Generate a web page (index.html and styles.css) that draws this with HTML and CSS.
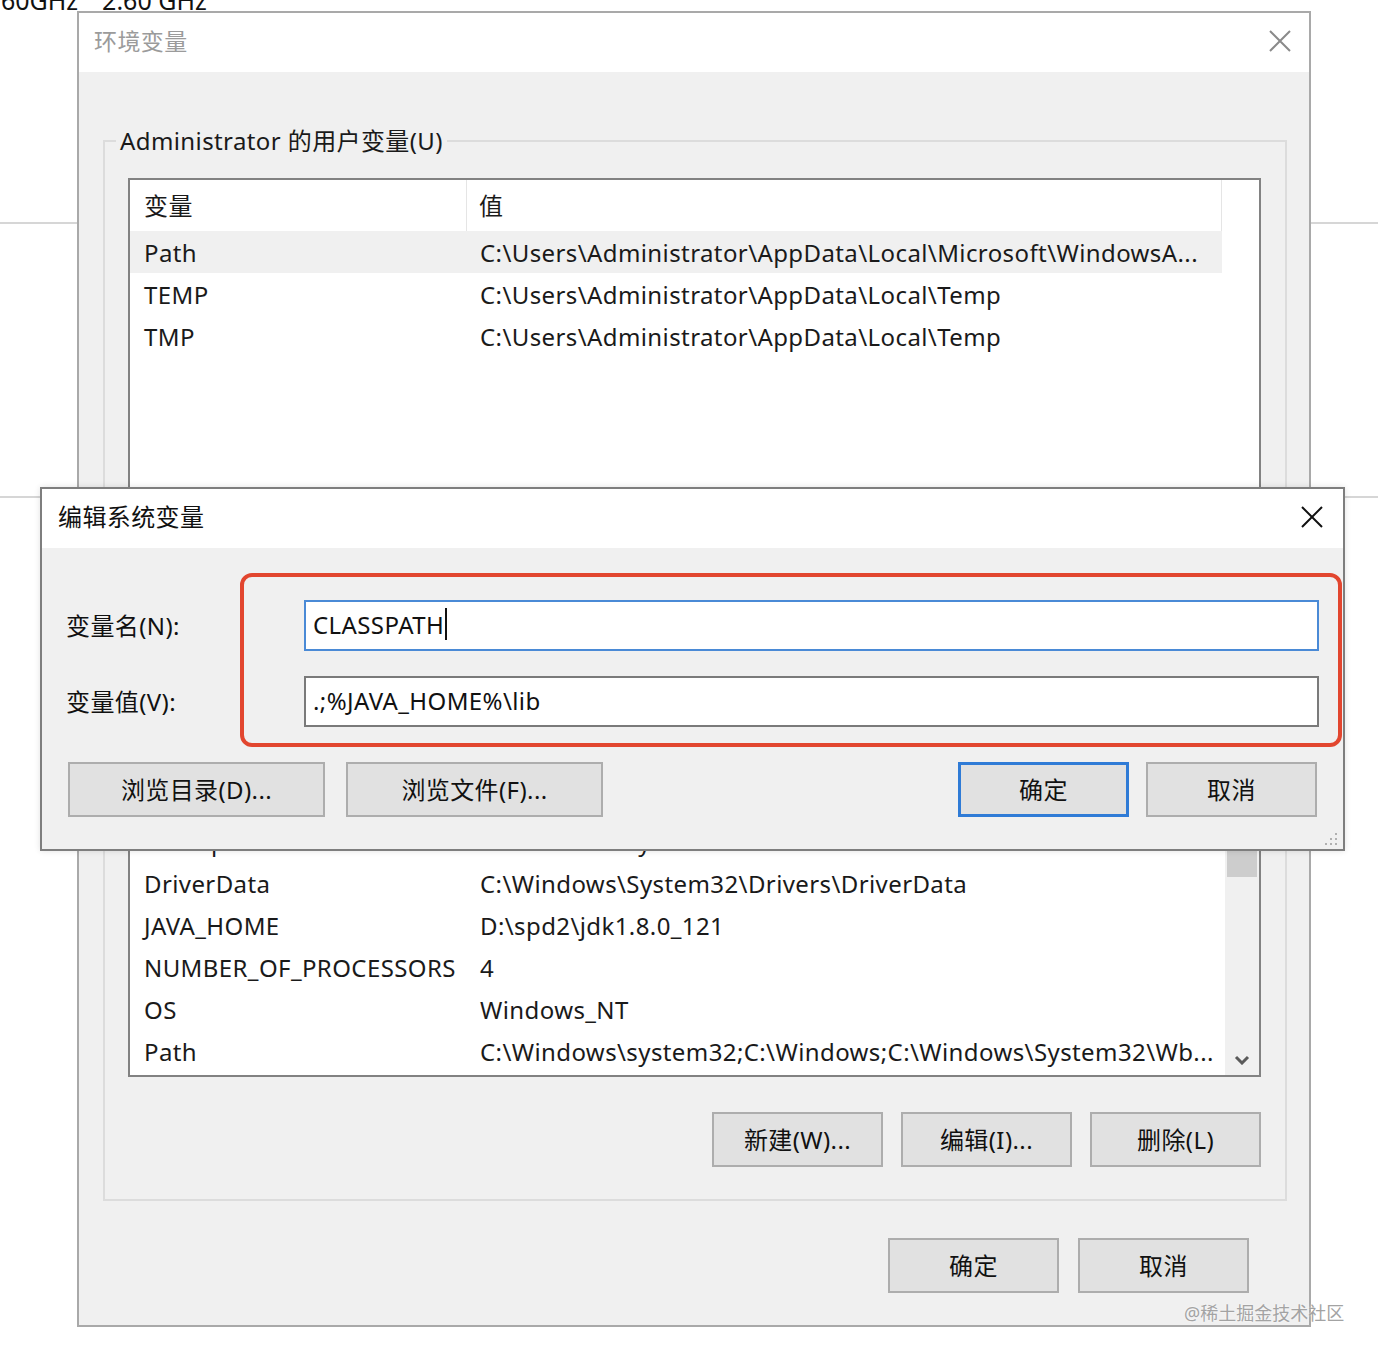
FILE: index.html
```html
<!DOCTYPE html>
<html lang="zh-CN">
<head>
<meta charset="utf-8">
<title>环境变量</title>
<link rel="stylesheet" href="styles.css">
</head>
<body>
<div class="desktop">
  <div class="desk-text"><span class="dt1">2.60GHz</span><span class="dt2">2.60 GHz</span></div>
  <div class="desk-line line1"></div>
  <div class="desk-line line2"></div>
</div>

<div class="win env">
  <div class="titlebar">
    <span class="title inactive">环境变量</span>
    <svg class="close" width="22" height="22" viewBox="0 0 22 22"><path d="M1 1 L21 21 M21 1 L1 21" stroke="#8a8a8a" stroke-width="2" fill="none"/></svg>
  </div>
  <div class="env-body">
    <fieldset class="group group-user">
      <legend>Administrator 的用户变量(U)</legend>
      <div class="list list-user">
        <div class="list-main">
          <div class="lrow lhead"><span class="c1">变量</span><span class="c2">值</span></div>
          <div class="lrow sel"><span class="c1">Path</span><span class="c2">C:\Users\Administrator\AppData\Local\Microsoft\WindowsA...</span></div>
          <div class="lrow"><span class="c1">TEMP</span><span class="c2">C:\Users\Administrator\AppData\Local\Temp</span></div>
          <div class="lrow"><span class="c1">TMP</span><span class="c2">C:\Users\Administrator\AppData\Local\Temp</span></div>
        </div>
      </div>
      <div class="btnrow group-btns">
        <div class="btn">新建(N)...</div>
        <div class="btn">编辑(E)...</div>
        <div class="btn">删除(D)</div>
      </div>
    </fieldset>
    <fieldset class="group group-sys">
      <legend>系统变量(S)</legend>
      <div class="list list-sys">
        <div class="list-main">
          <div class="lrow lhead"><span class="c1">变量</span><span class="c2">值</span></div>
          <div class="lrow"><span class="c1">ComSpec</span><span class="c2">C:\Windows\system32\cmd.exe</span></div>
          <div class="lrow"><span class="c1">DriverData</span><span class="c2">C:\Windows\System32\Drivers\DriverData</span></div>
          <div class="lrow"><span class="c1">JAVA_HOME</span><span class="c2">D:\spd2\jdk1.8.0_121</span></div>
          <div class="lrow"><span class="c1">NUMBER_OF_PROCESSORS</span><span class="c2">4</span></div>
          <div class="lrow"><span class="c1">OS</span><span class="c2">Windows_NT</span></div>
          <div class="lrow"><span class="c1">Path</span><span class="c2">C:\Windows\system32;C:\Windows;C:\Windows\System32\Wb...</span></div>
        </div>
        <div class="vscroll">
          <div class="thumb"></div>
          <svg class="chev" width="16" height="10" viewBox="0 0 16 10"><path d="M2 2 L8 8 L14 2" stroke="#5a5a5a" stroke-width="3" fill="none"/></svg>
        </div>
      </div>
      <div class="btnrow group-btns">
        <div class="btn">新建(W)...</div>
        <div class="btn">编辑(I)...</div>
        <div class="btn">删除(L)</div>
      </div>
    </fieldset>
    <div class="btnrow main-btns">
      <div class="btn">确定</div>
      <div class="btn">取消</div>
    </div>
  </div>
</div>

<div class="win edit">
  <div class="titlebar">
    <span class="title">编辑系统变量</span>
    <svg class="close" width="22" height="22" viewBox="0 0 22 22"><path d="M1 1 L21 21 M21 1 L1 21" stroke="#111" stroke-width="2" fill="none"/></svg>
  </div>
  <div class="edit-body">
    <div class="field">
      <span class="flabel">变量名(N):</span>
      <div class="tinput focus">CLASSPATH<span class="caret"></span></div>
    </div>
    <div class="field">
      <span class="flabel">变量值(V):</span>
      <div class="tinput">.;%JAVA_HOME%\lib</div>
    </div>
    <div class="edit-btns">
      <div class="btn wide">浏览目录(D)...</div>
      <div class="btn wide">浏览文件(F)...</div>
      <div class="spacer"></div>
      <div class="btn default">确定</div>
      <div class="btn">取消</div>
    </div>
  </div>
  <div class="highlight"></div>
  <svg class="grip" width="16" height="16" viewBox="0 0 16 16">
    <rect x="12" y="2" width="2" height="2" fill="#b0b0b0"/>
    <rect x="7" y="7" width="2" height="2" fill="#b0b0b0"/>
    <rect x="12" y="7" width="2" height="2" fill="#b0b0b0"/>
    <rect x="2" y="12" width="2" height="2" fill="#b0b0b0"/>
    <rect x="7" y="12" width="2" height="2" fill="#b0b0b0"/>
    <rect x="12" y="12" width="2" height="2" fill="#b0b0b0"/>
  </svg>
</div>

<div class="watermark">@稀土掘金技术社区</div>
</body>
</html>
```

FILE: styles.css
```css
* { box-sizing: border-box; }
html, body { margin: 0; padding: 0; }
body {
  width: 1378px;
  height: 1356px;
  overflow: hidden;
  background: #ffffff;
  font-family: "Noto Sans", "Noto Sans CJK SC", sans-serif;
  color: #1a1a1a;
  letter-spacing: 0.4px;
  position: relative;
}

/* desktop background */
.desktop { width: 100%; }
.desk-text {
  margin-top: -14px;
  margin-left: -20px;
  height: 28px;
  font-size: 25px;
  line-height: 28px;
  color: #111;
  white-space: nowrap;
  letter-spacing: 0;
}
.dt2 { margin-left: 24px; }
.desk-line { height: 2px; background: #d6d6d6; }
.line1 { margin-top: 208px; }
.line2 { margin-top: 272px; }

/* windows */
.win {
  position: absolute;
  background: #f0f0f0;
  display: flex;
  flex-direction: column;
}
.titlebar {
  background: #ffffff;
  height: 59px;
  flex: none;
  display: flex;
  align-items: center;
  justify-content: space-between;
}
.title { font-size: 23px; line-height: 30px; }
.title.inactive { color: #9b9b9b; margin-top: -3px; }

.env {
  left: 77px;
  top: 11px;
  width: 1234px;
  height: 1316px;
  border: 2px solid #a9a9a9;
}
.env .titlebar { padding: 0 18px 0 15px; }
.env .close { margin-top: -3px; }

.env-body { padding: 54px 22px 0 24px; }

.group {
  margin: 0;
  border: 2px solid #dcdcdc;
  min-width: 0;
}
.group legend {
  margin-left: -12px;
  padding: 0 4px;
  font-size: 24px;
  line-height: 30px;
  color: #1a1a1a;
}
.group-user { padding: 22px 24px 8px 23px; }
.group-user .group-btns { display: none; }
.group-sys { padding: 11px 24px 32px 23px; }

.list {
  border: 2px solid #828282;
  background: #fff;
  overflow: hidden;
  display: flex;
}
.list-user { height: 538px; }
.list-sys { height: 310px; }
.list-main { flex: 1; min-width: 0; }

.lrow {
  display: flex;
  height: 42px;
  width: 1092px;
  align-items: center;
  font-size: 24px;
  white-space: nowrap;
}
.lrow.lhead { height: 51px; }
.lrow.sel { background: #f0f0f0; }
.c1 { width: 337px; padding-left: 14px; flex: none; overflow: hidden; }
.c2 { padding-left: 13px; flex: 1; overflow: hidden; }
.lhead .c1 { border-right: 1px solid #e5e5e5; height: 100%; display: flex; align-items: center; padding-bottom: 3px; }
.lhead .c2 { height: 100%; display: flex; align-items: center; padding-left: 12px; padding-bottom: 3px; border-right: 1px solid #e5e5e5; }

.vscroll {
  width: 34px;
  flex: none;
  background: #f0f0f0;
  display: flex;
  flex-direction: column;
  align-items: center;
  justify-content: space-between;
  padding: 16px 0 10px;
}
.thumb { width: 30px; height: 92px; background: #cdcdcd; }

.btnrow { display: flex; justify-content: flex-end; }
.group-btns { margin-top: 35px; gap: 18px; padding-right: 0; }
.main-btns { margin-top: 37px; gap: 19px; padding-right: 38px; }

.btn {
  width: 171px;
  height: 55px;
  background: #e1e1e1;
  border: 2px solid #adadad;
  display: flex;
  align-items: center;
  justify-content: center;
  font-size: 24px;
  color: #111;
  flex: none;
  padding-bottom: 2px;
}
.btn.wide { width: 257px; }
.btn.default { border-color: #2f7bd6; border-width: 3px; }

/* edit dialog */
.edit {
  left: 40px;
  top: 487px;
  width: 1305px;
  height: 364px;
  border: 2px solid #7e7e7e;
  box-shadow: 0 0 6px rgba(0,0,0,0.12);
}
.edit .titlebar { padding: 0 20px 0 16px; }
.edit .title { font-size: 24px; color: #111; margin-top: -3px; }
.edit .close { margin-top: -4px; }
.edit-body { padding: 52px 24px 0 24px; }
.field {
  display: flex;
  align-items: center;
  margin-bottom: 25px;
}
.flabel { width: 238px; flex: none; font-size: 24px; color: #111; padding-bottom: 2px; }
.tinput {
  flex: 1;
  height: 51px;
  border: 2px solid #7a7a7a;
  background: #fff;
  padding-left: 7px;
  padding-bottom: 3px;
  display: flex;
  align-items: center;
  font-size: 24px;
  color: #111;
}
.tinput.focus { border-color: #4a8ad6; }
.caret { display: inline-block; width: 2px; height: 32px; background: #111; margin-left: 1px; }
.edit-btns {
  display: flex;
  margin-top: 35px;
  padding: 0 2px;
  gap: 21px;
}
.edit-btns .spacer { flex: 1; }
.edit-btns .btn.default { margin-right: -4px; }
.highlight {
  position: absolute;
  left: 198px;
  top: 84px;
  width: 1102px;
  height: 174px;
  border: 4px solid #e2462f;
  border-radius: 12px;
}
.grip { position: absolute; right: 4px; bottom: 2px; }

.watermark {
  position: absolute;
  left: 1184px;
  top: 1300px;
  font-size: 18px;
  line-height: 26px;
  letter-spacing: 0;
  color: #a3a3a3;
  text-shadow: 0 0 2px #fff;
  white-space: nowrap;
}
```
